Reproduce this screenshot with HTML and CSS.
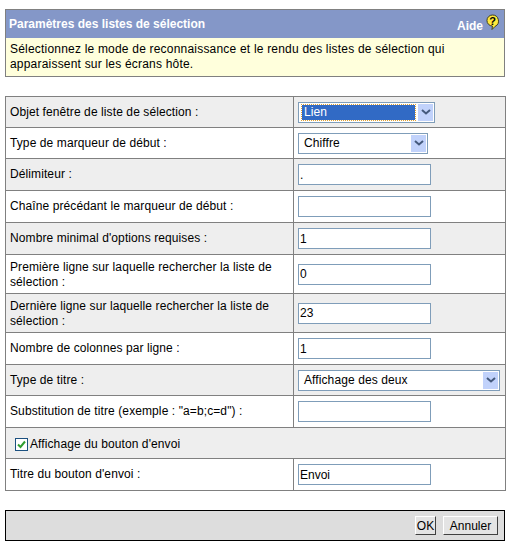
FILE: index.html
```html
<!DOCTYPE html>
<html lang="fr">
<head>
    <meta charset="UTF-8">
    <title>Paramètres des listes de sélection</title>
    <link rel="stylesheet" href="styles.css">
</head>
<body>
    <!-- Title and help text -->
    <div class="intro">
        <div class="title-bar">
            <span class="title">Paramètres des listes de sélection</span>
            <span class="help">Aide
                <svg class="help-icon" width="15" height="17" viewBox="0 0 15 17">
                    <path d="M7.5 1a6 6 0 0 1 2.6 11.4L7 15.5l.4-3.5A5.5 5.5 0 0 1 7.5 1z" fill="#ffe93c" stroke="#3f3f20"/>
                    <text x="7.5" y="11" class="help-mark">?</text>
                </svg>
            </span>
        </div>
        <p class="intro-text">Sélectionnez le mode de reconnaissance et le rendu des listes de sélection qui apparaissent sur les écrans hôte.</p>
    </div>

    <!-- Settings -->
    <table class="settings">
        <tr class="shaded row-31">
            <td class="label">Objet fenêtre de liste de sélection :</td>
            <td class="value">
                <div class="select select-first"><span class="select-text focused">Lien</span><span class="arrow"><svg width="10" height="6" viewBox="0 0 10 6"><path d="M1 1l4 3.5L9 1" fill="none" stroke="#44597c" stroke-width="2"/></svg></span></div>
            </td>
        </tr>
        <tr class="row-31">
            <td class="label">Type de marqueur de début :</td>
            <td class="value">
                <div class="select select-second"><span class="select-text">Chiffre</span><span class="arrow"><svg width="10" height="6" viewBox="0 0 10 6"><path d="M1 1l4 3.5L9 1" fill="none" stroke="#44597c" stroke-width="2"/></svg></span></div>
            </td>
        </tr>
        <tr class="shaded row-32">
            <td class="label">Délimiteur :</td>
            <td class="value"><input class="field" type="text" value="."></td>
        </tr>
        <tr class="row-32">
            <td class="label">Chaîne précédant le marqueur de début :</td>
            <td class="value"><input class="field" type="text"></td>
        </tr>
        <tr class="shaded row-32">
            <td class="label">Nombre minimal d'options requises :</td>
            <td class="value"><input class="field" type="text" value="1"></td>
        </tr>
        <tr class="row-39">
            <td class="label">Première ligne sur laquelle rechercher la liste de sélection :</td>
            <td class="value"><input class="field" type="text" value="0"></td>
        </tr>
        <tr class="shaded row-39">
            <td class="label">Dernière ligne sur laquelle rechercher la liste de sélection :</td>
            <td class="value"><input class="field" type="text" value="23"></td>
        </tr>
        <tr class="row-32">
            <td class="label">Nombre de colonnes par ligne :</td>
            <td class="value"><input class="field" type="text" value="1"></td>
        </tr>
        <tr class="shaded row-31">
            <td class="label">Type de titre :</td>
            <td class="value">
                <div class="select select-wide"><span class="select-text">Affichage des deux</span><span class="arrow"><svg width="10" height="6" viewBox="0 0 10 6"><path d="M1 1l4 3.5L9 1" fill="none" stroke="#44597c" stroke-width="2"/></svg></span></div>
            </td>
        </tr>
        <tr class="row-32">
            <td class="label">Substitution de titre (exemple : "a=b;c=d") :</td>
            <td class="value"><input class="field" type="text"></td>
        </tr>
        <tr class="shaded row-31">
            <td class="label check-cell" colspan="2">
                <span class="check"><svg width="11" height="11" viewBox="0 0 11 11"><path d="M2 5.5l2.5 2.5 4.5-5.5" fill="none" stroke="#2f9e2f" stroke-width="2"/></svg></span>Affichage du bouton d'envoi
            </td>
        </tr>
        <tr class="row-32">
            <td class="label">Titre du bouton d'envoi :</td>
            <td class="value"><input class="field" type="text" value="Envoi"></td>
        </tr>
    </table>

    <!-- Buttons -->
    <div class="actions">
        <button class="btn btn-ok" type="button">OK</button>
        <button class="btn btn-cancel" type="button">Annuler</button>
    </div>
</body>
</html>
```

FILE: styles.css
```css
/* General */
body {
    margin: 0;
    padding: 9px 10px 0 5px;
    background: #fff;
    color: #000;
    font-family: "Liberation Sans", Arial, sans-serif;
    font-size: 12px;
}

/* Title and help text */
.intro {
    width: 500px;
    box-sizing: border-box;
    border: 1px solid #808080;
}

.title-bar {
    display: flex;
    justify-content: space-between;
    align-items: center;
    height: 28px;
    padding: 0 4px 0 3px;
    background: #8497c8;
    color: #fff;
    font-weight: bold;
}

.help {
    display: flex;
    align-items: center;
    gap: 2px;
    padding-top: 3px;
}

.help-icon {
    margin-top: -6px;
}

.help-mark {
    font-family: "Liberation Sans", Arial, sans-serif;
    font-size: 11px;
    font-weight: bold;
    fill: #000;
    text-anchor: middle;
}

.intro-text {
    margin: 0;
    height: 38px;
    box-sizing: border-box;
    padding: 4px 40px 0 4px;
    background: #ffffdc;
    letter-spacing: 0.2px;
    line-height: 15px;
}

/* Settings */
.settings {
    width: 500px;
    margin-top: 19px;
    border-collapse: collapse;
    table-layout: fixed;
    letter-spacing: 0.1px;
}

.settings td {
    border: 1px solid #808080;
    padding: 0 5px 0 4px;
    line-height: 15px;
}

.shaded td {
    background: repeating-conic-gradient(#ebebeb 0 25%, #f1f1f1 0 50%) 0 0 / 2px 2px;
}

.row-31 { height: 31px; }
.row-32 { height: 32px; }
.row-39 { height: 39px; }

.settings .label {
    width: 278px;
}

.row-39 .label {
    padding-top: 2px;
}

.settings .value {
    width: 202px;
}

.settings .check-cell {
    padding-top: 3px;
    white-space: nowrap;
}

.check {
    display: inline-flex;
    align-items: center;
    justify-content: center;
    width: 11px;
    height: 11px;
    margin: 0 2px 0 5px;
    border: 1px solid #1c5180;
    background: #fff;
    vertical-align: -2px;
}

/* Form controls */
.field {
    display: block;
    box-sizing: border-box;
    width: 133px;
    height: 21px;
    margin: 0;
    padding: 0 1px;
    border: 1px solid #7f9db9;
    background: #fff;
    font: 12px "Liberation Sans", Arial, sans-serif;
}

.select {
    display: flex;
    align-items: center;
    box-sizing: border-box;
    height: 21px;
    padding: 1px;
    border: 1px solid #7f9db9;
    background: #fff;
}

.select-first { width: 137px; }
.select-second { width: 130px; }
.select-wide { width: 202px; }

.select-text {
    flex: 1;
    padding-left: 4px;
}

.select .focused {
    height: 15px;
    margin: 0 3px 0 2px;
    padding-left: 2px;
    line-height: 15px;
    background: #316ac5;
    color: #fff;
    outline: 1px dotted #e0a030;
}

.arrow {
    display: flex;
    align-items: center;
    justify-content: center;
    width: 15px;
    height: 17px;
    background: #c1d2fb;
}

/* Buttons */
.actions {
    display: flex;
    justify-content: flex-end;
    gap: 7px;
    box-sizing: border-box;
    width: 500px;
    height: 31px;
    margin-top: 19px;
    padding: 5px 6px 0 0;
    border: 1px solid #000;
    background: #dddddd;
}

.btn {
    height: 19px;
    padding: 0;
    border: 1px solid;
    border-color: #fff #404040 #404040 #fff;
    background: #e4e4e4;
    color: #000;
    font: 12px "Liberation Sans", Arial, sans-serif;
}

.btn-ok { width: 21px; }
.btn-cancel { width: 55px; }
```
